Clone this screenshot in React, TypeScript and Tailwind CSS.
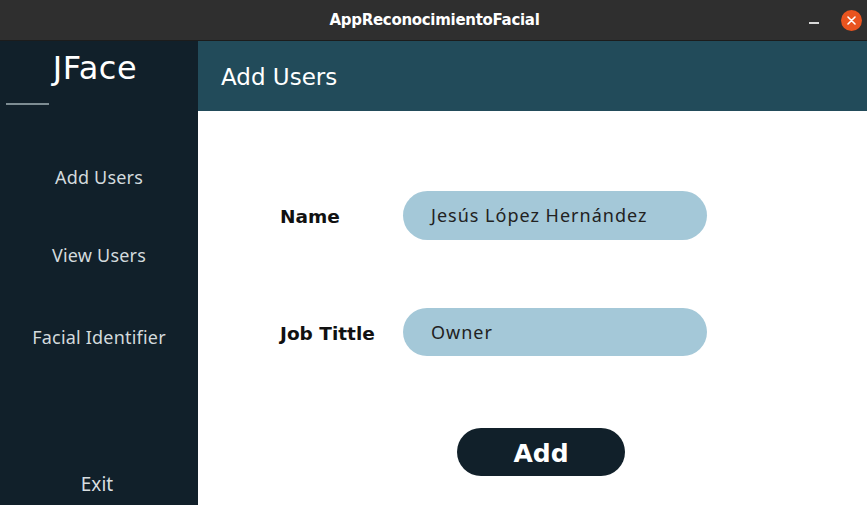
import React from 'react';

export default function App() {
  const menu = [
    { label: 'Add Users', cls: 'mt-[63px]' },
    { label: 'View Users', cls: 'mt-[60px]' },
    { label: 'Facial Identifier', cls: 'mt-[64px]' },
  ];

  return (
    <div className="w-[867px] h-[505px] flex flex-col overflow-hidden bg-white">
      {/* window title bar */}
      <div className="h-[41px] shrink-0 flex items-center bg-[#2f2f2f] border-b border-[#1c1c1c] relative">
        <div className="flex-1 text-center text-white font-bold text-[15px] font-['DejaVu_Sans',sans-serif] tracking-[-0.3px] pl-[2px]">
          AppReconocimientoFacial
        </div>
        <div className="absolute right-[5px] top-[10px] flex items-center gap-[22px]">
          <div className="w-[10px] h-[2px] bg-[#d8d8d8] mt-[4px]" />
          <div className="w-[21px] h-[21px] rounded-full bg-[#e9541f] flex items-center justify-center">
            <svg width="9" height="9" viewBox="0 0 9 9">
              <path d="M1 1 L8 8 M8 1 L1 8" stroke="white" strokeWidth="1.6" strokeLinecap="round" />
            </svg>
          </div>
        </div>
      </div>

      <div className="flex flex-1 min-h-0">
        {/* sidebar */}
        <div className="w-[198px] shrink-0 bg-[#11202a] flex flex-col font-['Noto_Sans',sans-serif]">
          <div className="text-center text-white text-[32px] font-['DejaVu_Sans',sans-serif] leading-none mt-[11px] pr-[8px] tracking-[0.5px]">
            JFace
          </div>
          <div className="ml-[6px] mt-[19px] w-[43px] h-[2px] bg-[#7d8c92]" />
          {menu.map((m) => (
            <div key={m.label} className={`text-center text-[#d3dadd] text-[18px] leading-none tracking-[0.2px] ${m.cls}`}>
              {m.label}
            </div>
          ))}
          <div className="mt-auto mb-[11px] text-center text-[#d8dee0] text-[19px] leading-none pr-[4px]">Exit</div>
        </div>

        {/* main */}
        <div className="flex-1 flex flex-col">
          <div className="h-[70px] shrink-0 bg-[#224b5a] flex items-center pl-[23px] pt-[3px] text-white text-[23px] font-['DejaVu_Sans',sans-serif]">
            Add Users
          </div>
          <div className="flex-1 flex flex-col">
            <div className="flex items-center mt-[80px] ml-[82px]">
              <div className="w-[123px] pt-[3px] text-[18.5px] font-bold text-[#111] font-['DejaVu_Sans',sans-serif]">Name</div>
              <div className="w-[304px] h-[49px] rounded-full bg-[#a4c8d8] flex items-center pl-[28px] text-[18px] text-[#222] font-['Noto_Sans',sans-serif] tracking-[1px]">
                Jesús López Hernández
              </div>
            </div>
            <div className="flex items-center mt-[68px] ml-[82px]">
              <div className="w-[123px] pt-[3px] text-[18.5px] font-bold text-[#111] font-['DejaVu_Sans',sans-serif]">Job Tittle</div>
              <div className="w-[304px] h-[48px] rounded-full bg-[#a4c8d8] flex items-center pl-[28px] text-[18px] text-[#222] font-['Noto_Sans',sans-serif] tracking-[1px]">
                Owner
              </div>
            </div>
            <div className="mt-[72px] ml-[259px] w-[168px] h-[48px] rounded-full bg-[#11202a] flex items-center justify-center pt-[3px] text-white text-[25px] font-bold font-['DejaVu_Sans',sans-serif]">
              Add
            </div>
          </div>
        </div>
      </div>
    </div>
  );
}
